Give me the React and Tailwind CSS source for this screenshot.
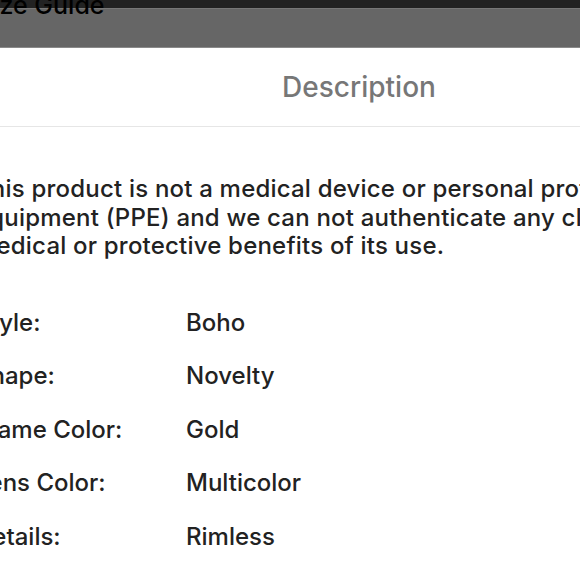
const SPECS = [
  ["Style:", "Boho"],
  ["Shape:", "Novelty"],
  ["Frame Color:", "Gold"],
  ["Lens Color:", "Multicolor"],
  ["Details:", "Rimless"],
];

export default function App() {
  return (
    <div className="h-[580px] w-[580px] overflow-hidden bg-white font-['Inter','Liberation_Sans',sans-serif] text-[#222]">
      {/* dimmed page behind the sheet */}
      <div className="relative h-[48px] bg-[#666] border-b border-[#8a8a8a]">
        <div className="h-[9px] bg-[#222] border-b border-[#777]" />
        <span className="absolute left-[-23px] top-[-10px] whitespace-nowrap text-[25px] font-medium leading-[30px] text-black">
          Size Guide
        </span>
      </div>

      <div className="ml-[-25px] w-[768px]">
        <div className="flex h-[79px] items-center justify-center border-b border-[#e6e6e6]">
          <h2 className="text-[28px] font-medium text-[#777]">Description</h2>
        </div>

        <p className="whitespace-nowrap pt-[48px] text-[24px] font-medium leading-[28.5px] tracking-[0.2px]">
          This product is not a medical device or personal protective
          <br />
          equipment (PPE) and we can not authenticate any claims of
          <br />
          medical or protective benefits of its use.
        </p>

        <div className="mt-[35px]">
          {SPECS.map(([label, value]) => (
            <div key={label} className="flex text-[24px] font-medium leading-[53.6px]">
              <span className="w-[211px] shrink-0">{label}</span>
              <span>{value}</span>
            </div>
          ))}
        </div>
      </div>
    </div>
  );
}
